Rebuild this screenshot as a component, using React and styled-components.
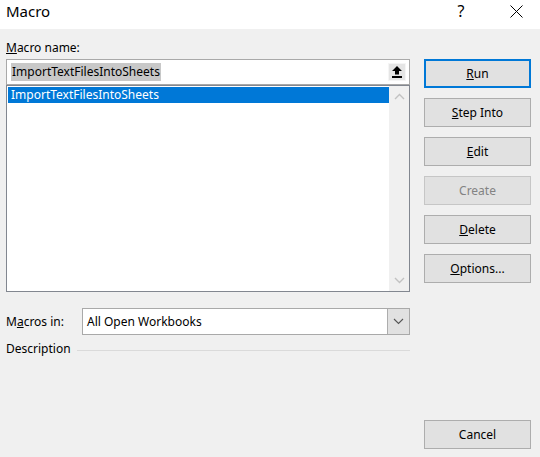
import React from "react";
import styled, { createGlobalStyle } from "styled-components";

const Global = createGlobalStyle`
  html, body {
    margin: 0;
    padding: 0;
    background: #f0f0f0;
  }
  body {
    font-family: "Noto Sans", "Open Sans", Arial, sans-serif;
    font-size: 12px;
    color: #000;
  }
`

const Dialog = styled.div`
    width: 540px;
    height: 457px;
    background: #f0f0f0;
    display: flex;
    flex-direction: column;
    overflow: hidden;
`
const TitleBar = styled.div`
    height: 29px;
    background: #fff;
    display: flex;
    align-items: center;
    padding-left: 6px;
    box-sizing: border-box;
`
const Title = styled.div`
    font-size: 15px;
    flex-grow: 1;
    padding-bottom: 8px;
`
const TitleBtn = styled.div`
    width: ${p => p.w}px;
    height: 29px;
    box-sizing: border-box;
    display: flex;
    align-items: center;
    justify-content: center;
    font-size: 16px;
    color: #000;
    padding-bottom: ${p => p.pb}px;
`
const Body = styled.div`
    flex-grow: 1;
    display: flex;
    flex-direction: row;
    padding: 11px 9px 8px 6px;
    gap: 14px;
`
const Left = styled.div`
    width: 404px;
    display: flex;
    flex-direction: column;
`
const Label = styled.div`
    line-height: 16px;
    white-space: nowrap;
`
const NameBox = styled.div`
    margin-top: 3px;
    height: 26px;
    box-sizing: border-box;
    border: 1px solid #a9a9a9;
    background: #fff;
    display: flex;
    align-items: center;
    padding: 0 3px 0 4px;
`
const Selected = styled.span`
    background: #c8c8c8;
    line-height: 18px;
    padding: 0 1px;
    flex-grow: 0;
`
const Spacer = styled.div`
    flex-grow: 1;
`
const PickBtn = styled.div`
    width: 18px;
    height: 18px;
    box-sizing: border-box;
    background: #e5e5e5;
    border: 1px solid #f5f5f5;
    display: flex;
    align-items: center;
    justify-content: center;
`
const List = styled.div`
    height: 207px;
    box-sizing: border-box;
    border: 1px solid #828790;
    background: #fff;
    display: flex;
    flex-direction: row;
    padding: 1px 0 0 1px;
`
const Items = styled.div`
    flex-grow: 1;
`
const Item = styled.div`
    height: 16px;
    line-height: 16px;
    padding-left: 3px;
    background: ${p => (p.active ? "#0078d7" : "transparent")};
    color: ${p => (p.active ? "#fff" : "#000")};
`
const ScrollBar = styled.div`
    width: 20px;
    margin-top: -1px;
    background: #f0f0f0;
    display: flex;
    flex-direction: column;
    justify-content: space-between;
    align-items: center;
    padding: 7px 0 7px;
`
const Row = styled.div`
    display: flex;
    align-items: center;
    margin-top: ${p => p.mt}px;
`
const Combo = styled.div`
    margin-left: auto;
    width: 328px;
    height: 27px;
    box-sizing: border-box;
    border: 1px solid #a9a9a9;
    background: #fff;
    display: flex;
    align-items: stretch;
`
const ComboText = styled.div`
    flex-grow: 1;
    padding-left: 4px;
    display: flex;
    align-items: center;
`
const ComboArrow = styled.div`
    width: 21px;
    background: #e1e1e1;
    border-left: 1px solid #adadad;
    display: flex;
    align-items: center;
    justify-content: center;
`
const Rule = styled.div`
    flex-grow: 1;
    height: 1px;
    background: #dadada;
    margin-left: 6px;
    margin-top: 2px;
`
const Right = styled.div`
    width: 107px;
    display: flex;
    flex-direction: column;
    gap: 10px;
    padding-top: 19px;
`
const Button = styled.div`
    height: 29px;
    box-sizing: border-box;
    background: #e1e1e1;
    border: ${p => (p.primary ? "2px solid #0078d7" : p.disabled ? "1px solid #c6c6c6" : "1px solid #adadad")};
    color: ${p => (p.disabled ? "#838383" : "#000")};
    display: flex;
    align-items: center;
    justify-content: center;
    padding-bottom: 1px;
    margin-top: ${p => (p.bottom ? "auto" : "0")};
`

const Chevron = ({ down, color = "#c2c2c2", w = 1.4 }) => (
  <svg width="11" height="7" viewBox="0 0 11 7">
    <polyline
      points={down ? "1,1 5.5,5.5 10,1" : "1,6 5.5,1.5 10,6"}
      fill="none"
      stroke={color}
      strokeWidth={w}
    />
  </svg>
);

function App() {
  const buttons = [
    { key: "R", rest: "un", primary: true },
    { key: "S", rest: "tep Into" },
    { key: "E", rest: "dit" },
    { key: "", rest: "Create", disabled: true },
    { key: "D", rest: "elete" },
    { key: "O", rest: "ptions..." },
  ];

  return (
    <React.Fragment>
      <Global />
      <Dialog>
        <TitleBar>
          <Title>Macro</Title>
          <TitleBtn w={62} pb={7}>?</TitleBtn>
          <TitleBtn w={48} pb={6}>
            <svg width="13" height="13" viewBox="0 0 13 13">
              <path d="M0.5 0.5 L12.5 12.5 M12.5 0.5 L0.5 12.5" stroke="#000" strokeWidth="1" />
            </svg>
          </TitleBtn>
        </TitleBar>
        <Body>
          <Left>
            <Label><u>M</u>acro name:</Label>
            <NameBox>
              <Selected>ImportTextFilesIntoSheets</Selected>
              <Spacer />
              <PickBtn>
                <svg width="10" height="12" viewBox="0 0 10 12">
                  <path d="M5 0 L10 5 L7 5 L7 8.5 L3 8.5 L3 5 L0 5 Z" fill="#000" />
                  <rect x="0" y="10" width="10" height="2" fill="#000" />
                </svg>
              </PickBtn>
            </NameBox>
            <List>
              <Items>
                <Item active>ImportTextFilesIntoSheets</Item>
              </Items>
              <ScrollBar>
                <Chevron />
                <Chevron down />
              </ScrollBar>
            </List>
            <Row mt={16}>
              <Label>M<u>a</u>cros in:</Label>
              <Combo>
                <ComboText>All Open Workbooks</ComboText>
                <ComboArrow>
                  <Chevron down color="#555" w={1.1} />
                </ComboArrow>
              </Combo>
            </Row>
            <Row mt={6}>
              <Label>Description</Label>
              <Rule />
            </Row>
          </Left>
          <Right>
            {buttons.map((b) => (
              <Button key={b.rest} primary={b.primary} disabled={b.disabled}>
                {b.key && <u>{b.key}</u>}
                {b.rest}
              </Button>
            ))}
            <Button bottom>Cancel</Button>
          </Right>
        </Body>
      </Dialog>
    </React.Fragment>
  );
}

export default App;
